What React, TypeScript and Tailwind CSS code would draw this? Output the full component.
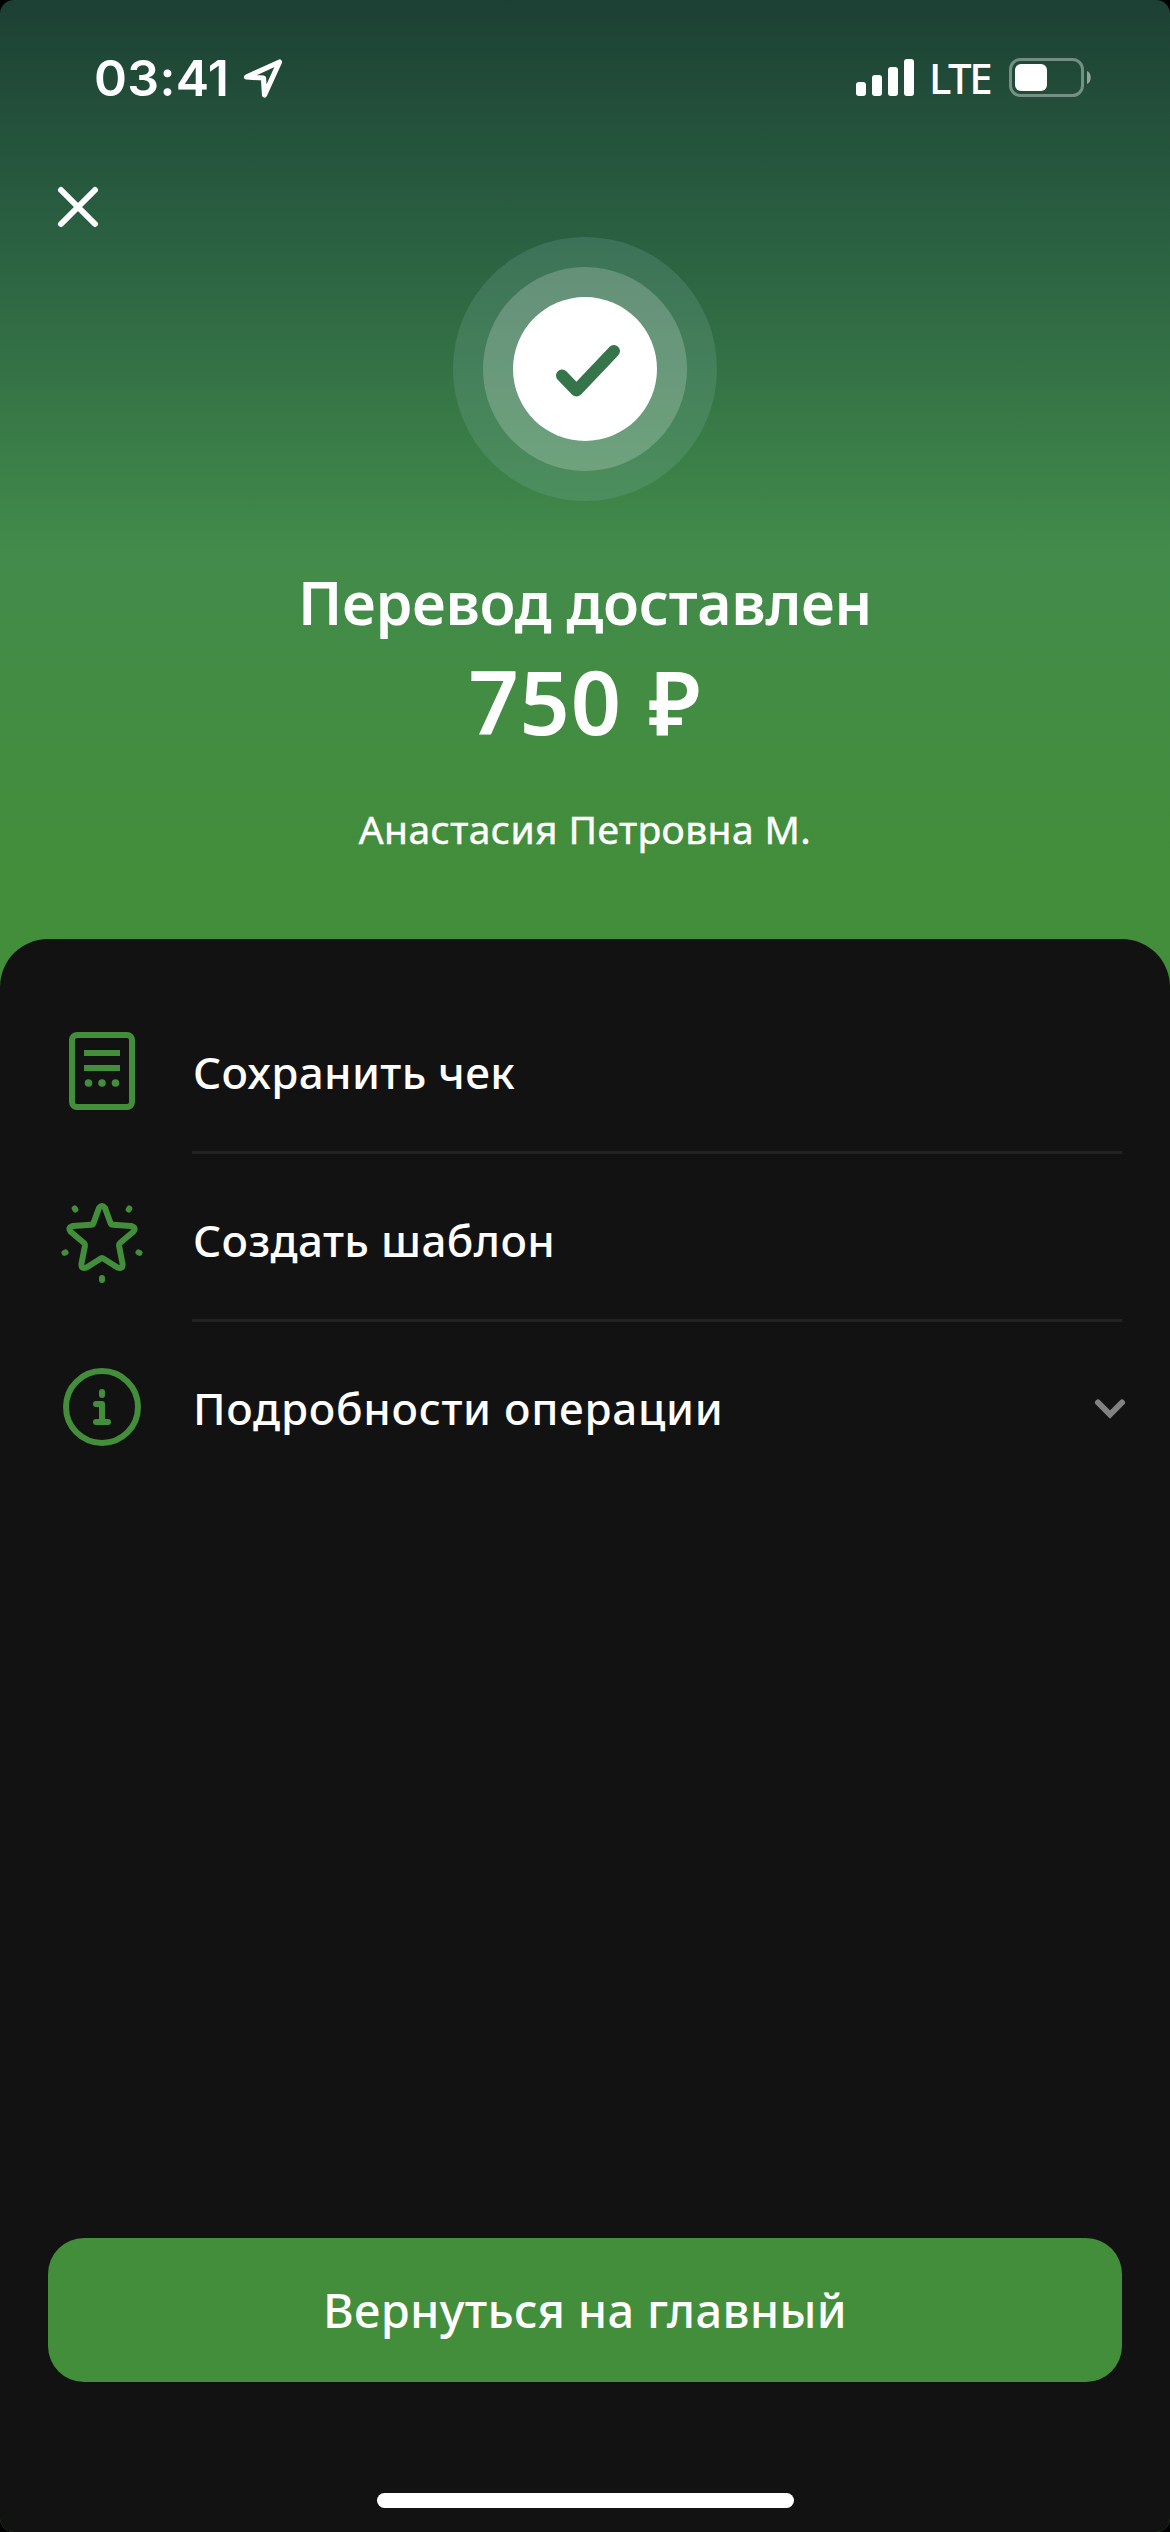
import type { ReactNode } from 'react';

const GREEN = '#428e3a';

function StatusBar() {
  return (
    <div className="h-[156px] pl-[94px] pr-[78px] flex justify-between">
      <div className="pt-12 flex items-start">
        <span className="w-[134px] font-['Inter',sans-serif] font-semibold text-[50px] leading-[60px] tracking-[0.3px] whitespace-nowrap">03:41</span>
        <svg className="mt-2 ml-[13px]" width="44" height="44" viewBox="0 0 44 44" fill="none" stroke="white" strokeWidth="5.2" strokeLinejoin="round">
          <path d="M5.5 21L38.5 6L23.5 39L22.5 22Z" />
        </svg>
      </div>
      <div className="pt-14 flex items-start">
        <svg width="58" height="40" viewBox="0 0 58 40" fill="white">
          <rect x="0" y="26" width="10" height="14" rx="3" />
          <rect x="16" y="19" width="10" height="21" rx="3" />
          <rect x="32" y="11" width="10" height="29" rx="3" />
          <rect x="48" y="3" width="10" height="37" rx="3" />
        </svg>
        <span className="-mt-[2px] ml-[15px] w-[62px] font-medium text-[42px] leading-[48px] tracking-[-2.5px] whitespace-nowrap">LTE</span>
        <svg className="ml-[18px] mt-[2px]" width="83" height="40" viewBox="0 0 83 40" fill="none">
          <rect x="1.5" y="1.5" width="72" height="36" rx="10" stroke="white" strokeOpacity="0.38" strokeWidth="3" />
          <rect x="6" y="6" width="32" height="27" rx="6" fill="white" />
          <path d="M78 13C83 15 83 24 78 26Z" fill="white" fillOpacity="0.5" />
        </svg>
      </div>
    </div>
  );
}

function SuccessBadge() {
  return (
    <div className="mx-auto size-[264px] rounded-full bg-[#85b8b0]/20 flex items-center justify-center">
      <div className="size-[204px] rounded-full bg-white/20 flex items-center justify-center">
        <div className="size-36 rounded-full bg-white flex items-center justify-center">
          <svg width="72" height="60" viewBox="0 0 72 60" fill="none" stroke="#36754a" strokeWidth="12" strokeLinecap="round" strokeLinejoin="round">
            <path d="M13 36.5L27.5 51.5L65 12" />
          </svg>
        </div>
      </div>
    </div>
  );
}

function ReceiptIcon() {
  return (
    <svg width="90" height="90" viewBox="0 0 90 90" fill="none">
      <rect x="15" y="9" width="60" height="72" rx="5" stroke={GREEN} strokeWidth="6" />
      <path d="M27 27H63M27 42H63" stroke={GREEN} strokeWidth="6" />
      <circle cx="31.5" cy="57" r="3.8" fill={GREEN} />
      <circle cx="45" cy="57" r="3.8" fill={GREEN} />
      <circle cx="58.5" cy="57" r="3.8" fill={GREEN} />
    </svg>
  );
}

function StarIcon() {
  return (
    <svg width="90" height="90" viewBox="0 0 90 90" fill="none" stroke={GREEN} strokeWidth="6" strokeLinecap="round" strokeLinejoin="round">
      <path d="M42 14Q45 10 48 14L53.5 29Q54.2 30.7 56 30.8L74 32Q80 33.5 76 38L63 49Q61.8 50 62 51.5L65.6 70Q65.8 75.5 60.5 73.5L47 65Q45 63.3 43 65L29.5 73.5Q24.2 75.5 24.4 70L28 51.5Q28.2 50 27 49L14 38Q10 33.5 16 32L34 30.8Q35.8 30.7 36.5 29Z" />
      <path d="M17.7 14.5L18.3 15.5M72.3 14.5L71.7 15.5M8.5 58.4L7.5 58.9M81.5 58.4L82.5 58.9M45 84V86" />
    </svg>
  );
}

function InfoIcon() {
  return (
    <svg width="90" height="90" viewBox="0 0 90 90" fill="none" stroke={GREEN} strokeWidth="6" strokeLinecap="round" strokeLinejoin="round">
      <circle cx="45" cy="45" r="36" />
      <path d="M45 30V33M39 42H45V60M39 60H51" />
    </svg>
  );
}

type RowProps = {
  icon: ReactNode;
  label: string;
  divider?: boolean;
  children?: ReactNode;
};

function Row({ icon, label, divider, children }: RowProps) {
  return (
    <div className="h-[168px] pl-[57px] pb-px flex">
      <div className="w-[135px] pt-[39px] shrink-0">{icon}</div>
      <div className={divider ? 'flex-1 mr-12 flex justify-between items-start border-b-[3px] border-[#232323] tracking-[0.35px]' : 'flex-1 mr-[42px] flex justify-between items-start tracking-[0.7px]'}>
        <span className="mt-[55px] pl-px font-medium text-[44px] leading-[60px] whitespace-nowrap">{label}</span>
        {children}
      </div>
    </div>
  );
}

export default function App() {
  return (
    <div className="w-[1170px] h-[2532px] bg-black font-['Noto_Sans',sans-serif] text-white">
      <div className="h-full rounded-[14px] overflow-hidden flex flex-col bg-[linear-gradient(180deg,#1c4034_0px,#2b6242_250px,#428b4b_550px,#428e3a_880px)]">
        <StatusBar />

        <button className="ml-12 mt-[21px] size-[60px]">
          <svg width="60" height="60" viewBox="0 0 60 60" fill="none" stroke="white" strokeWidth="6" strokeLinecap="round">
            <path d="M13 13L47 47M47 13L13 47" />
          </svg>
        </button>

        <SuccessBadge />

        <div className="flex flex-col items-center whitespace-nowrap">
          <h1 className="mt-[65px] font-semibold text-[59px] leading-[72px] tracking-[-0.3px]">Перевод доставлен</h1>
          <p className="mt-[13px] font-semibold text-[88px] leading-[100px] tracking-[0.8px] [word-spacing:3px]">750 ₽</p>
          <p className="mt-[51px] text-[39px] leading-[54px] tracking-[0.4px] [-webkit-text-stroke:0.5px_white]">Анастасия Петровна М.</p>
        </div>

        <main className="mt-[83px] flex-1 rounded-t-[48px] bg-[#121212] pt-12 flex flex-col">
          <Row icon={<ReceiptIcon />} label="Сохранить чек" divider />
          <Row icon={<StarIcon />} label="Создать шаблон" divider />
          <Row icon={<InfoIcon />} label="Подробности операции">
            <svg className="mt-[71px]" width="36" height="28" viewBox="0 0 36 28" fill="none" stroke="#828282" strokeWidth="6" strokeLinecap="round">
              <path d="M6 8.5L18 20.5L30 8.5" />
            </svg>
          </Row>

          <button className="mt-auto mx-12 h-36 shrink-0 rounded-[36px] bg-[#428e3a] font-medium text-[47px] tracking-[0.3px] whitespace-nowrap">
            Вернуться на главный
          </button>
          <div className="mt-[111px] mb-6 mx-auto w-[417px] h-[15px] shrink-0 rounded-full bg-white" />
        </main>
      </div>
    </div>
  );
}
